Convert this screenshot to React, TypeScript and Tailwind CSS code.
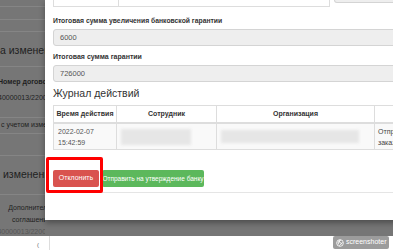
export default function App() {
  return (
    <div className="relative w-[393px] h-[250px] overflow-hidden bg-white font-['Liberation_Sans',Arial,sans-serif]">
      <div className="flex h-[236px] bg-[#767676]">
        {/* dimmed page behind */}
        <div className="w-[45px] shrink-0 overflow-hidden text-[#1f1f1f] whitespace-nowrap">
          <div className="h-[7px] border-b border-[#858585]" />
          <div className="h-[13px] border-b border-[#858585]" />
          <div className="h-[12px] border-b border-[#858585]" />
          <div className="h-[35px] flex items-center pt-[3px] border-b border-[#858585] text-[10.5px]">а изменений</div>
          <div className="h-[8px]" />
          <div className="h-[15px] flex items-center text-[7px] font-bold -ml-[2px]">Номер договора</div>
          <div className="h-[16px] flex items-center text-[7px] -ml-[2px]">40000013/22000004</div>
          <div className="h-[12px] border-b border-[#858585]" />
          <div className="h-[16px] flex items-center text-[7px] pl-[1px] border-b border-[#858585]">с учетом изменений</div>
          <div className="h-[22px] border-b border-[#858585]" />
          <div className="h-[39px] flex items-center text-[10.5px] pl-[3px] border-b border-[#858585]">изменений</div>
          <div className="flex flex-col items-center text-[7px] pt-[7px] leading-[12px] pl-[14px]">
            <span>Дополнитель</span>
            <span>соглашени</span>
            <span className="text-[#555]">40000013/22000004</span>
          </div>
        </div>
        {/* modal */}
        <div className="flex-1 flex flex-col">
          <div className="h-[220px] bg-white shadow-[0_3px_6px_rgba(0,0,0,0.35)] pl-[8px] flex flex-col text-[#333]">
            <div className="h-[8px] flex items-start -mt-[1px]">
              <div className="h-[8px] flex border-l border-b border-r border-[#ddd] w-[277px]">
                <div className="w-[65px] border-r border-[#ddd]" />
                <div className="flex-1" />
              </div>
              <div className="ml-[4px] flex-1 h-[4px] bg-[#eeeeee] border border-t-0 border-[#d4d4d4] rounded-b-[3px]" />
            </div>
            <div className="mt-[10px] h-[9px] flex items-center text-[6.8px] font-bold text-[#333] whitespace-nowrap">Итоговая сумма увеличения банковской гарантии</div>
            <div className="mt-[3px] h-[17px] bg-[#eeeeee] border border-[#d4d4d4] rounded-l-[3px] flex items-center pl-[6px] text-[7.5px] text-[#555]">6000</div>
            <div className="mt-[7px] h-[9px] flex items-center text-[7px] font-bold text-[#333]">Итоговая сумма гарантии</div>
            <div className="mt-[3px] h-[17px] bg-[#eeeeee] border border-[#d4d4d4] rounded-l-[3px] flex items-center pl-[6px] text-[7.5px] text-[#555]">726000</div>
            <div className="mt-[6px] h-[12px] flex items-center text-[10.5px] text-[#333]">Журнал действий</div>
            <div className="mt-[5px] flex flex-col border-l border-t border-[#ddd] text-[7px] text-[#333]">
              <div className="h-[18px] flex border-b-2 border-[#ddd]">
                <div className="w-[63px] border-r border-[#ddd] flex items-center justify-center font-bold text-[#333]">Время действия</div>
                <div className="w-[100px] border-r border-[#ddd] flex items-center justify-center font-bold text-[#333]">Сотрудник</div>
                <div className="w-[158px] border-r border-[#ddd] flex items-center justify-center font-bold text-[#333]">Организация</div>
                <div className="flex-1" />
              </div>
              <div className="h-[26px] flex bg-[#f9f9f9] border-b border-[#ddd] text-[#555]">
                <div className="w-[63px] border-r border-[#ddd] flex flex-col justify-center pl-[4px] leading-[11px]">
                  <span>2022-02-07</span>
                  <span>15:42:59</span>
                </div>
                <div className="w-[100px] border-r border-[#ddd] flex items-center pl-[4px]">
                  <div className="w-[70px] h-[16px] bg-[#e6e6e6] blur-[1.5px]" />
                </div>
                <div className="w-[158px] border-r border-[#ddd] flex items-center pl-[4px]">
                  <div className="w-[138px] h-[13px] bg-[#e6e6e6] blur-[1.5px]" />
                </div>
                <div className="flex-1 flex flex-col justify-center pl-[3px] leading-[11px] whitespace-nowrap text-[#444]">
                  <span>Отправлено</span>
                  <span>заказчику</span>
                </div>
              </div>
            </div>
            <div className="mt-[20px] flex gap-[3px] h-[17px]">
              <div className="w-[46px] bg-[#d9534f] rounded-[2px] flex items-center justify-center text-white text-[7px]">Отклонить</div>
              <div className="w-[102px] bg-[#5cb85c] rounded-[2px] flex items-center justify-center text-white text-[6.5px] whitespace-nowrap">Отправить на утверждение банку</div>
            </div>
            <div className="mt-[5px] border-t border-[#e5e5e5]" />
          </div>
        </div>
      </div>
      <div className="h-[14px] flex">
        <div className="w-[50px] border-r border-[#ddd] flex items-end justify-end pr-[10px] text-[6px] text-[#666]">(</div>
      </div>
      {/* red annotation */}
      <div className="absolute left-[46px] top-[157px] w-[57px] h-[36px] border-[3px] border-[#ff0000] rounded-[2px]" />
      {/* watermark */}
      <div className="absolute left-[333px] top-[236px] h-[13px] bg-[#9c9c9c] rounded-[2px] flex items-center gap-[2px] px-[3px] text-white text-[7px] whitespace-nowrap">
        <svg width="8" height="8" viewBox="0 0 10 10" fill="none" stroke="white" strokeWidth="1">
          <circle cx="5" cy="5" r="4.2" />
          <path d="M3 2.2 L7.5 6.5 M2 4.5 L6 1.5 M4 8.5 L8.2 4 M2.5 7 L5 1" />
        </svg>
        <span>screenshoter</span>
      </div>
    </div>
  );
}
